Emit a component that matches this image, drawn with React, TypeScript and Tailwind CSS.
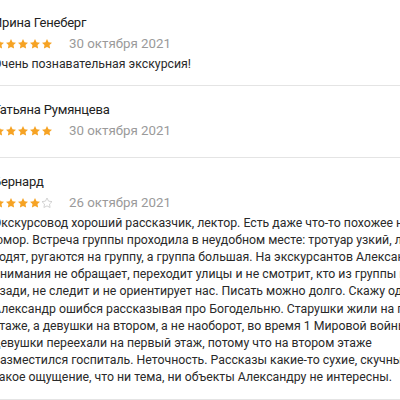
const STAR = 'M12 2l3.09 6.26L22 9.27l-5 4.87 1.18 6.88L12 17.77l-6.18 3.25L7 14.14 2 9.27l6.91-1.01L12 2z';

function Stars({ value }: { value: number }) {
  return (
    <div className="flex items-center">
      {[1, 2, 3, 4, 5].map((i) =>
        i <= value ? (
          <svg key={i} width="12" height="12" viewBox="0 0 24 24" className="shrink-0">
            <path d={STAR} fill="#f6a324" />
          </svg>
        ) : (
          <svg key={i} width="12" height="12" viewBox="0 0 24 24" className="shrink-0">
            <path d={STAR} fill="none" stroke="#c8c8c8" strokeWidth="1.6" strokeLinejoin="round" />
          </svg>
        )
      )}
    </div>
  );
}

type Review = { name: string; rating: number; date: string; lines: string[]; pad: string };

const reviews: Review[] = [
  {
    name: 'Ирина Генеберг',
    rating: 5,
    date: '30 октября 2021',
    lines: ['Очень познавательная экскурсия!'],
    pad: 'pt-[11px] pb-[12px]'
  },
  { name: 'Татьяна Румянцева', rating: 5, date: '30 октября 2021', lines: [], pad: 'pt-[12px] pb-[17px]' },
  {
    name: 'Бернард',
    rating: 4,
    date: '26 октября 2021',
    pad: 'pt-[12px] pb-[13px]',
    lines: [
      'Экскурсовод хороший рассказчик, лектор. Есть даже что-то похожее на',
      'юмор. Встреча группы проходила в неудобном месте: тротуар узкий, люди',
      'ходят, ругаются на группу, а группа большая. На экскурсантов Александр',
      'внимания не обращает, переходит улицы и не смотрит, кто из группы идет',
      'сзади, не следит и не ориентирует нас. Писать можно долго. Скажу одно:',
      'Александр ошибся рассказывая про Богодельню. Старушки жили на первом',
      'этаже, а девушки на втором, а не наоборот, во время 1 Мировой войны',
      'девушки переехали на первый этаж, потому что на втором этаже',
      'разместился госпиталь. Неточность. Рассказы какие-то сухие, скучные,',
      'такое ощущение, что ни тема, ни объекты Александру не интересны.'
    ]
  }
];

export default function App() {
  return (
    <div className="w-[400px] h-[400px] overflow-hidden bg-white font-['Roboto',sans-serif]">
      {reviews.map((r, idx) => (
        <div key={idx} className={`border-b border-[#e4e4e4] ${r.pad}`}>
          <div className="-ml-[7px] w-[460px]">
            <div className="text-[13px] leading-[24px] tracking-[-0.2px] text-[#222] whitespace-nowrap">{r.name}</div>
            <div className="flex h-[18px] items-center gap-4">
              <Stars value={r.rating} />
              <span className="text-[13.3px] leading-[18px] text-[#9a9a9a] whitespace-nowrap">{r.date}</span>
            </div>
            {r.lines.length > 0 && (
              <div className="mt-[3px] text-[12.3px] leading-[17.1px] text-[#2a2a2a]">
                {r.lines.map((l, i) => (
                  <div key={i} className="whitespace-nowrap">{l}</div>
                ))}
              </div>
            )}
          </div>
        </div>
      ))}
    </div>
  );
}
